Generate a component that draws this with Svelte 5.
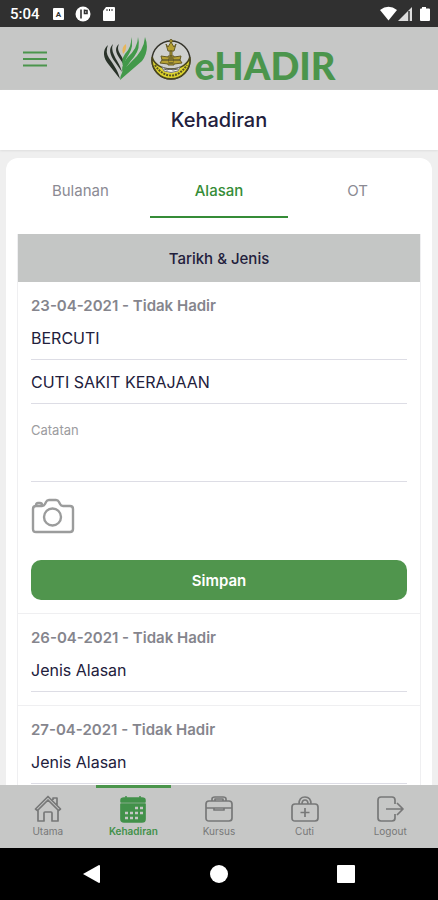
<script>
  let activeTab = "Alasan";
  let activePage = "Kehadiran";

  const tabs = ["Bulanan", "Alasan", "OT"];
  const pages = ["Utama", "Kehadiran", "Kursus", "Cuti", "Logout"];

  let records = [
    {
      date: "23-04-2021",
      reason: "BERCUTI",
      detail: "CUTI SAKIT KERAJAAN",
      note: "",
    },
    { date: "26-04-2021", reason: "Jenis Alasan" },
    { date: "27-04-2021", reason: "Jenis Alasan" },
  ];

  const reasons = ["Jenis Alasan", "BERCUTI"];
  const details = ["CUTI SAKIT KERAJAAN"];
</script>

<div class="app">
  <div class="status">
    <span class="clock">5:04</span>
    <svg class="notices" width="66" height="16" viewBox="0 0 66 16" fill="#fff">
      <rect x="3" y="2" width="11" height="12" rx="1" />
      <text x="8.500" y="11" text-anchor="middle" font-size="8" font-weight="700" fill="#303030">A</text>
      <circle cx="33" cy="8" r="7.500" />
      <path d="M31 3.500v9M34.500 3.500v4h2.500v-3h-2.500" fill="none" stroke="#303030" stroke-width="1.600" />
      <path d="M56 1h8q1 0 1 1v12q0 1-1 1H54q-1 0-1-1V5z" />
      <path d="M57 3v2M59.500 3v2M62 3v2" stroke="#303030" />
    </svg>
    <svg class="signals" width="50" height="16" viewBox="0 0 50 16" fill="#fff">
      <path d="M0 4q8.500-6.500 17 0L8.500 14.500z" />
      <path d="M18 15L32 1v14z" fill="#ddd" />
      <path d="M29 5v10" stroke="#303030" stroke-width="1.500" />
      <path d="M42 1h4v1.500h3q1 0 1 1V14q0 1-1 1h-8q-1 0-1-1V3.500q0-1 1-1h1z" />
    </svg>
  </div>

  <header>
    <button class="menu" aria-label="Menu">
      <svg width="26" height="16" viewBox="0 0 26 16" stroke="#4b954c" stroke-width="2">
        <path d="M1 1.500h24M1 8h24M1 14.500h24" />
      </svg>
    </button>
    <div class="brand">
      <svg width="46" height="46" viewBox="0 0 46 46">
        <g fill="#293229">
          <path d="M6 9C0 14 1 22 7 29L18 43C16 34 11 28 7 22Q3 16 6 9z" />
          <path d="M11 8C6 13 8 19 13 26L20 36C18 28 14 24 12 19Q9 13 11 8z" />
          <path d="M17 8C12 12 14 17 18 23L22 29C22 23 19 20 17 16Q15 12 17 8z" />
        </g>
        <path d="M24 8Q19 11 21 18Q25 14 24 8z" fill="#e7b65b" />
        <g fill="#42994a">
          <path d="M29 1Q32 10 27 18Q22 25 22 32Q18 25 23 18Q30 11 29 1z" />
          <path d="M36 1Q39 12 32 21Q24 30 21 38Q18 31 25 22Q36 12 36 1z" />
          <path d="M43 1Q48 14 40 25L18 44Q18 36 29 26Q42 15 43 1z" />
        </g>
      </svg>
      <svg width="42" height="44" viewBox="0 0 42 44">
        <circle cx="21" cy="23" r="19" fill="#cfd0ce" stroke="#34332b" stroke-width="1.500" />
        <path d="M2.200 20A19 19 0 1 0 39.800 20A19 14 0 0 1 2.200 20z" fill="#ddd42d" stroke="#4b471c" stroke-width="1.500" />
        <path d="M5 28Q12 38.500 21 38.500T37 28" fill="none" stroke="#5a5421" stroke-width="2" stroke-dasharray="2 1" />
        <path d="M12 30Q21 35 30 30L28 34Q21 37 14 34z" fill="#eee" stroke="#777" />
        <g fill="#b7a132" stroke="#655b25">
          <path d="M16 7l2 3 3-5 3 5 2-3-2 7h-6z" />
          <circle cx="21" cy="4" r="1.500" />
          <path d="M20 14h2v5h-2zM18 19h6v9h-6z" />
          <path d="M18 20l-7-1 1 4-2 3 8 1M24 20l7-1-1 4 2 3-8 1" />
        </g>
        <path d="M12 23h18M19 26h4M19 21h4" stroke="#3c3c2a" />
        <path d="M14 32l3 1 3-1 3 1 5-1" fill="none" stroke="#5d5d5d" />
      </svg>
      <span class="name">eHADIR</span>
    </div>
  </header>

  <h1>Kehadiran</h1>

  <main>
    <section class="card">
      <div class="tabs" role="tablist">
        {#each tabs as tab}
          <button
            role="tab"
            aria-selected={tab === activeTab}
            class:active={tab === activeTab}
            on:click={() => (activeTab = tab)}>{tab}</button>
        {/each}
      </div>

      <table>
        <thead>
          <tr><th>Tarikh &amp; Jenis</th></tr>
        </thead>
        <tbody>
          {#each records as record, i}
            <tr>
              <td>
                <label class="date" for="reason-{i}">{record.date} - Tidak Hadir</label>
                <select id="reason-{i}" bind:value={record.reason}>
                  {#each reasons as reason}
                    <option>{reason}</option>
                  {/each}
                </select>
                {#if record.detail}
                  <select aria-label="Jenis cuti" bind:value={record.detail}>
                    {#each details as detail}
                      <option>{detail}</option>
                    {/each}
                  </select>
                  <label class="note" for="note-{i}">Catatan</label>
                  <input id="note-{i}" type="text" bind:value={record.note} />
                  <button class="camera" aria-label="Kamera">
                    <svg width="44" height="36" viewBox="0 0 44 36" fill="none" stroke="#9b9c9c" stroke-width="2.400">
                      <path d="M5 8h6q2 0 3-2l1-2q1-2 3-2h7q2 0 3 2l1 2q1 2 3 2h7q3 0 3 3v20q0 3-3 3H5q-3 0-3-3V11q0-3 3-3zM5 7q0-2 2-2h2q2 0 2 2" />
                      <circle cx="21.500" cy="19" r="8.500" />
                    </svg>
                  </button>
                  <button class="save">Simpan</button>
                {/if}
              </td>
            </tr>
          {/each}
        </tbody>
      </table>
    </section>
  </main>

  <nav class="pages">
    {#each pages as page}
      <a href="#{page}" class:active={page === activePage} on:click={() => (activePage = page)}>
        <svg width="28" height="28" viewBox="0 0 28 28" fill="none" stroke="currentColor" stroke-width="1.700" stroke-linejoin="round">
          {#if page === "Utama"}
            <path d="M1.500 14L14 1.500 26.500 14l-2 1.500L14 5 3.500 15.500zM4 15v11h6v-8q0-1 1-1h6q1 0 1 1v8h6V15M19 5V3h4v7" />
          {:else if page === "Kehadiran"}
            <path d="M2 9h24v15q0 3-3 3H5q-3 0-3-3z" fill="currentColor" />
            <path d="M2 7V5q0-2 3-2h18q3 0 3 2v2zM7 1v4M21 1v4" fill="currentColor" stroke-width="1.500" />
            <path d="M16 13h3M21 13h3M6 18h3M11 18h3M16 18h3M21 18h3M6 23h3M11 23h3M16 23h3" stroke="#c6c7c6" stroke-width="2.600" />
          {:else if page === "Kursus"}
            <path d="M4 6h20q3 0 3 3v14q0 3-3 3H4q-3 0-3-3V9q0-3 3-3zM7 6V4q0-2 3-2h8q3 0 3 2v2M10 6V4h8v2M1 13h26M9 13v2h10v-2" />
          {:else if page === "Cuti"}
            <path d="M4 9h20q3 0 3 3v11q0 3-3 3H4q-3 0-3-3V12q0-3 3-3zM8 9Q8 2 14 2T20 9M11 9q0-4 3-4t3 4M14 13v9M9.500 17.500h9" />
          {:else}
            <path d="M19 9V5q0-3-3-3H5Q2 2 2 5v18q0 3 3 3h11q3 0 3-3v-4M10 14h17M21 8l6 6-6 6" />
          {/if}
        </svg>
        <span>{page}</span>
      </a>
    {/each}
  </nav>

  <div class="system">
    <button aria-label="Back">
      <svg width="20" height="20" viewBox="0 0 20 20" fill="#fff"><path d="M1 10L17 1q1 0 1 1v16q0 1-1 1z" /></svg>
    </button>
    <button aria-label="Home">
      <svg width="20" height="20" viewBox="0 0 20 20" fill="#fff"><circle cx="10" cy="10" r="9" /></svg>
    </button>
    <button aria-label="Recent">
      <svg width="20" height="20" viewBox="0 0 20 20" fill="#fff"><rect x="1" y="1" width="18" height="18" rx="1" /></svg>
    </button>
  </div>
</div>

<style>
  :global(body) {
    margin: 0;
  }

  .app {
    display: flex;
    flex-direction: column;
    height: 100vh;
    background: #efefef;
    color: #22203c;
    font-family: Inter, "Open Sans", sans-serif;
  }

  .app * {
    box-sizing: border-box;
  }

  button {
    padding: 0;
    border: 0;
    background: none;
    font: inherit;
    color: inherit;
    cursor: pointer;
  }

  svg {
    display: block;
    flex: none;
  }

  .status {
    display: flex;
    align-items: center;
    height: 27px;
    padding: 0 8px 0 10px;
    background: #303030;
    color: #fff;
    font-family: Roboto, sans-serif;
  }

  .clock {
    font-size: 15px;
    font-weight: 500;
  }

  .notices {
    margin-left: 10px;
  }

  .signals {
    margin-left: auto;
  }

  header {
    display: grid;
    grid-template-columns: 1fr auto 1fr;
    align-items: center;
    height: 63px;
    padding: 0 22px;
    background: #c6c7c6;
  }

  .menu {
    justify-self: start;
  }

  .brand {
    display: flex;
    align-items: center;
    gap: 2px;
  }

  .name {
    padding-top: 12px;
    color: #4b954c;
    font-family: Lato, sans-serif;
    font-size: 38px;
    font-weight: 900;
    line-height: 40px;
  }

  h1 {
    flex: none;
    margin: 0;
    background: #fff;
    box-shadow: 0 1px 2px #dedede;
    font-size: 20px;
    font-weight: 500;
    line-height: 60px;
    text-align: center;
  }

  main {
    flex: 1;
    min-height: 0;
    padding: 8px 6px 0;
    overflow-y: auto;
    scrollbar-width: none;
  }

  .card {
    padding: 0 11px 12px;
    border-radius: 12px 12px 0 0;
    background: #fff;
  }

  .tabs {
    display: flex;
    margin: 0 -6px 16px;
  }

  .tabs button {
    flex: 1;
    height: 60px;
    padding-top: 6px;
    border-bottom: 2px solid transparent;
    color: #8b8a93;
    font-size: 15px;
  }

  .tabs .active {
    border-color: #358c37;
    color: #358c37;
    font-weight: 500;
  }

  table {
    width: 100%;
    border: 1px solid #efeff1;
    border-top: 0;
    border-spacing: 0;
  }

  th {
    height: 48px;
    padding: 0;
    background: #c4c6c5;
    font-size: 15px;
    font-weight: 500;
  }

  td {
    padding: 14px 13px 13px;
    border-bottom: 1px solid #efeff1;
  }

  .date,
  .note {
    display: block;
    line-height: 20px;
  }

  .date {
    color: #85858d;
    font-size: 15px;
    font-weight: 600;
  }

  .note {
    margin-top: 16px;
    color: #9c9ca0;
    font-size: 13px;
  }

  select,
  input {
    display: block;
    width: 100%;
    height: 44px;
    padding: 0;
    border: 0;
    border-bottom: 1px solid #dddde5;
    border-radius: 0;
    background: none;
    appearance: none;
    color: inherit;
    font-family: inherit;
    font-size: 16px;
    outline: none;
  }

  input {
    height: 42px;
  }

  .camera {
    display: block;
    margin: 16px 0 26px;
  }

  .save {
    display: block;
    width: 100%;
    height: 40px;
    border-radius: 10px;
    background: #50954d;
    color: #fff;
    font-size: 15px;
    font-weight: 600;
  }

  .pages {
    display: flex;
    padding: 0 5px;
    background: #c6c7c6;
  }

  .pages a {
    display: flex;
    flex: 1;
    flex-direction: column;
    align-items: center;
    height: 63px;
    margin: 0 5px;
    padding-top: 7px;
    border-top: 3px solid transparent;
    color: #777878;
    font-size: 10px;
    line-height: 16px;
    text-decoration: none;
  }

  .pages .active {
    border-color: #4b954c;
    color: #42914a;
    font-weight: 600;
  }

  .system {
    display: flex;
    justify-content: center;
    gap: 107px;
    padding: 16px 0;
    background: #000;
  }
</style>
